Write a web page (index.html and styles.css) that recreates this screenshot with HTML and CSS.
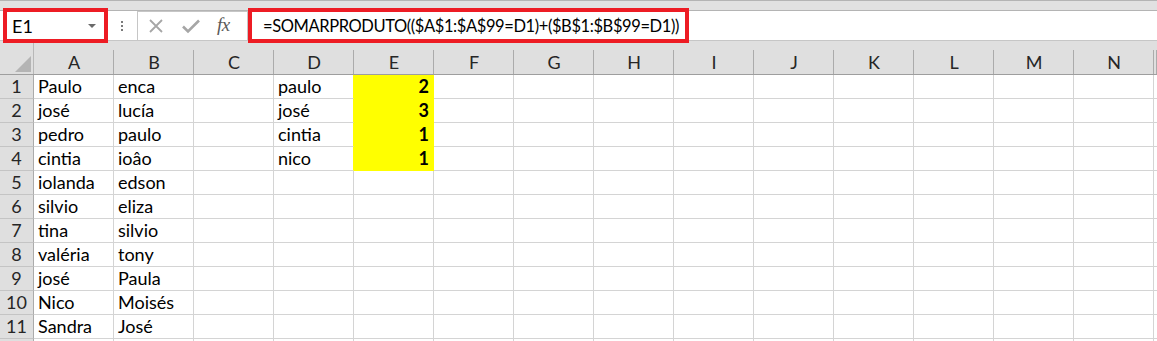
FILE: index.html
```html
<!DOCTYPE html>
<html lang="pt">
<head>
<meta charset="utf-8">
<title>Planilha</title>
<link rel="stylesheet" href="styles.css">
</head>
<body>
<div class="topband"></div>
<div class="toolbar">
  <div class="namebox"><span class="ref">E1</span><span class="drop"></span></div>
  <div class="dots"><i></i><i></i><i></i></div>
  <div class="fxbox">
    <svg class="ico" width="18" height="18" viewBox="0 0 18 18"><path d="M3 3 L15 15 M15 3 L3 15" stroke="#a6a6a6" stroke-width="1.8" fill="none"/></svg>
    <svg class="ico" width="20" height="18" viewBox="0 0 20 18"><path d="M2 9.5 L7 14.5 L18 3.5" stroke="#a6a6a6" stroke-width="2.6" fill="none"/></svg>
    <span class="fx">fx</span>
  </div>
  <div class="formula">=SOMARPRODUTO(($A$1:$A$99=D1)+($B$1:$B$99=D1))</div>
</div>
<div class="sheet">
  <div class="hrow">
    <div class="corner"><span class="tri"></span></div>
    <div class="h">A</div><div class="h">B</div><div class="h">C</div><div class="h">D</div><div class="h">E</div><div class="h">F</div><div class="h">G</div><div class="h">H</div><div class="h">I</div><div class="h">J</div><div class="h">K</div><div class="h">L</div><div class="h">M</div><div class="h">N</div><div class="h"></div>
  </div>
  <div class="row"><div class="rh">1</div><div class="c">Paulo</div><div class="c">enca</div><div class="c"></div><div class="c dy">paulo</div><div class="c y">2</div><div class="c"></div><div class="c"></div><div class="c"></div><div class="c"></div><div class="c"></div><div class="c"></div><div class="c"></div><div class="c"></div><div class="c"></div><div class="c"></div></div>
  <div class="row"><div class="rh">2</div><div class="c">josé</div><div class="c">lucía</div><div class="c"></div><div class="c dy">josé</div><div class="c y">3</div><div class="c"></div><div class="c"></div><div class="c"></div><div class="c"></div><div class="c"></div><div class="c"></div><div class="c"></div><div class="c"></div><div class="c"></div><div class="c"></div></div>
  <div class="row"><div class="rh">3</div><div class="c">pedro</div><div class="c">paulo</div><div class="c"></div><div class="c dy">cintia</div><div class="c y">1</div><div class="c"></div><div class="c"></div><div class="c"></div><div class="c"></div><div class="c"></div><div class="c"></div><div class="c"></div><div class="c"></div><div class="c"></div><div class="c"></div></div>
  <div class="row"><div class="rh">4</div><div class="c">cintia</div><div class="c">ioâo</div><div class="c"></div><div class="c dy">nico</div><div class="c y">1</div><div class="c"></div><div class="c"></div><div class="c"></div><div class="c"></div><div class="c"></div><div class="c"></div><div class="c"></div><div class="c"></div><div class="c"></div><div class="c"></div></div>
  <div class="row"><div class="rh">5</div><div class="c">iolanda</div><div class="c">edson</div><div class="c"></div><div class="c"></div><div class="c"></div><div class="c"></div><div class="c"></div><div class="c"></div><div class="c"></div><div class="c"></div><div class="c"></div><div class="c"></div><div class="c"></div><div class="c"></div><div class="c"></div></div>
  <div class="row"><div class="rh">6</div><div class="c">silvio</div><div class="c">eliza</div><div class="c"></div><div class="c"></div><div class="c"></div><div class="c"></div><div class="c"></div><div class="c"></div><div class="c"></div><div class="c"></div><div class="c"></div><div class="c"></div><div class="c"></div><div class="c"></div><div class="c"></div></div>
  <div class="row"><div class="rh">7</div><div class="c">tina</div><div class="c">silvio</div><div class="c"></div><div class="c"></div><div class="c"></div><div class="c"></div><div class="c"></div><div class="c"></div><div class="c"></div><div class="c"></div><div class="c"></div><div class="c"></div><div class="c"></div><div class="c"></div><div class="c"></div></div>
  <div class="row"><div class="rh">8</div><div class="c">valéria</div><div class="c">tony</div><div class="c"></div><div class="c"></div><div class="c"></div><div class="c"></div><div class="c"></div><div class="c"></div><div class="c"></div><div class="c"></div><div class="c"></div><div class="c"></div><div class="c"></div><div class="c"></div><div class="c"></div></div>
  <div class="row"><div class="rh">9</div><div class="c">josé</div><div class="c">Paula</div><div class="c"></div><div class="c"></div><div class="c"></div><div class="c"></div><div class="c"></div><div class="c"></div><div class="c"></div><div class="c"></div><div class="c"></div><div class="c"></div><div class="c"></div><div class="c"></div><div class="c"></div></div>
  <div class="row"><div class="rh">10</div><div class="c">Nico</div><div class="c">Moisés</div><div class="c"></div><div class="c"></div><div class="c"></div><div class="c"></div><div class="c"></div><div class="c"></div><div class="c"></div><div class="c"></div><div class="c"></div><div class="c"></div><div class="c"></div><div class="c"></div><div class="c"></div></div>
  <div class="row"><div class="rh">11</div><div class="c">Sandra</div><div class="c">José</div><div class="c"></div><div class="c"></div><div class="c"></div><div class="c"></div><div class="c"></div><div class="c"></div><div class="c"></div><div class="c"></div><div class="c"></div><div class="c"></div><div class="c"></div><div class="c"></div><div class="c"></div></div>
  <div class="row"><div class="rh"></div><div class="c"></div><div class="c"></div><div class="c"></div><div class="c"></div><div class="c"></div><div class="c"></div><div class="c"></div><div class="c"></div><div class="c"></div><div class="c"></div><div class="c"></div><div class="c"></div><div class="c"></div><div class="c"></div><div class="c"></div></div>
</div>
</body>
</html>
```
FILE: styles.css
```css
* { box-sizing: border-box; }
html, body { margin: 0; padding: 0; background: #fff; overflow: hidden; }
body { font-family: Lato, "Open Sans", sans-serif; color: #000; width: 1157px; height: 341px; }

.topband { height: 11px; background: #e1e1e1; border-top: 1px solid #b4b4b4; border-bottom: 1px solid #b4b4b4; }

.toolbar { display: flex; align-items: center; height: 30px; background: #fff; border-bottom: 1px solid #c6c6c6; }

.namebox { flex: 0 0 105px; height: 35px; margin-left: 3px; border: 4px solid #ed1c24; background: #fff; display: flex; align-items: center; justify-content: space-between; padding: 0 8px 0 5px; position: relative; z-index: 2; }
.ref { font-size: 18px; line-height: 1; }
.drop { width: 0; height: 0; border-left: 4px solid transparent; border-right: 4px solid transparent; border-top: 4px solid #6a6a6a; margin-top: 1px; }

.dots { display: flex; flex-direction: column; gap: 2px; margin-left: 13px; width: 2px; }
.dots i { display: block; width: 2px; height: 2px; background: #7a7a7a; }

.fxbox { align-self: flex-end; height: 29px; margin-left: 14px; width: 111px; border: 1px solid #c6c6c6; border-bottom: none; display: flex; align-items: center; padding-left: 9px; gap: 0; }
.fxbox .ico:first-child { margin-right: 16px; }
.fxbox .ico:nth-child(2) { margin-right: 16px; }
.fx { font-family: "Liberation Serif", serif; font-style: italic; font-size: 19px; color: #5a5a5a; letter-spacing: -0.5px; margin-top: -3px; }

.formula { flex: 0 0 441px; height: 35px; border: 4px solid #ed1c24; display: flex; align-items: center; padding-left: 11px; font-size: 16.5px; letter-spacing: -0.4px; white-space: nowrap; position: relative; z-index: 2; }

.sheet { display: flex; flex-direction: column; }
.hrow, .row { display: grid; grid-template-columns: 34px repeat(14, 80px) 1fr; }
.hrow { height: 34px; background: #dfdfdf; border-bottom: 1px solid #9e9e9e; }
.corner { border-right: 1px solid #b8b8b8; display: flex; justify-content: flex-end; align-items: flex-end; padding: 0 2px 2px 0; }
.tri { width: 0; height: 0; border-left: 16px solid transparent; border-bottom: 16px solid #b4b4b4; }
.h { font-size: 18px; text-align: center; color: #262626; line-height: 1; padding-top: 12px; background: linear-gradient(#ababab, #ababab) right bottom / 1px 24px no-repeat; }

.row { height: 24px; }
.rh { background: #dfdfdf; border-right: 1px solid #ababab; border-bottom: 1px solid #c4c4c4; font-size: 18px; text-align: center; color: #262626; line-height: 23px; }
.c { border-right: 1px solid #d4d4d4; border-bottom: 1px solid #d4d4d4; font-size: 18px; line-height: 23px; padding-left: 4px; white-space: nowrap; overflow: hidden; }
.y { background: #ffff00; border-color: #ffff00; text-align: right; font-weight: bold; padding-right: 4px; }
.dy { border-right-color: #ffff00; }
```
